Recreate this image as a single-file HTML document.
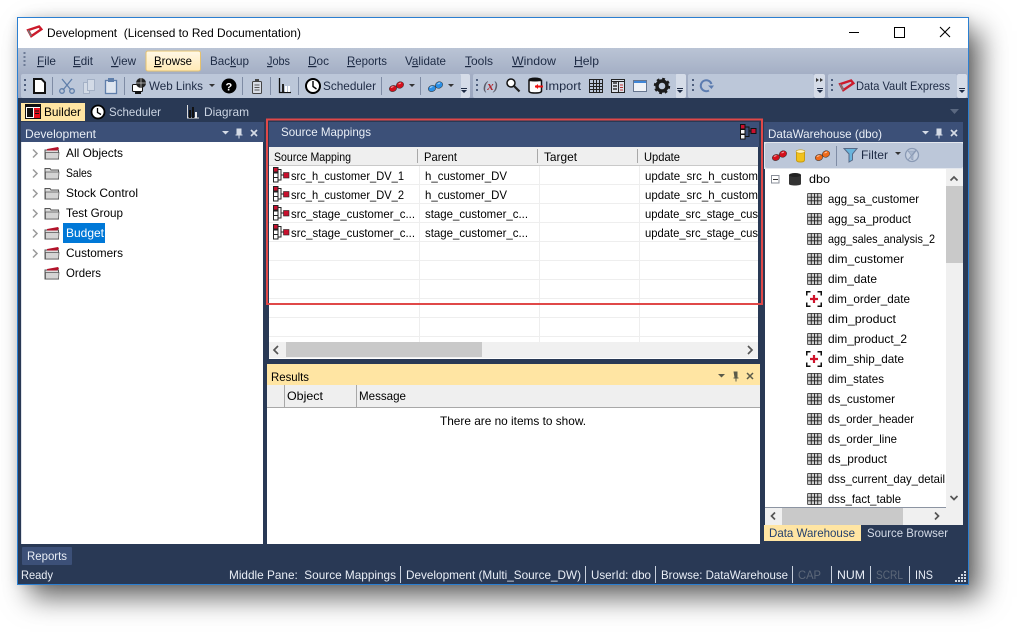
<!DOCTYPE html>
<html><head><meta charset="utf-8"><title>Development</title>
<style>
html,body{margin:0;padding:0;background:#fff;width:1017px;height:632px;overflow:hidden}
#shadow{position:absolute;left:18px;top:18px;width:950px;height:566px;box-shadow:12px 13px 26px rgba(0,0,0,.62),0 0 10px rgba(0,0,0,.14)}
svg.main{position:absolute;left:0;top:0}
text{font-family:"Liberation Sans",sans-serif;font-size:12px;fill:#000;white-space:pre}
.m{fill:#1d2a44}
.l{fill:#e9eef6}
.d{fill:#5d6879}
.u{text-decoration:underline}
</style></head><body>
<div id="shadow"></div>
<svg class="main" width="1017" height="632" viewBox="0 0 1017 632" xmlns="http://www.w3.org/2000/svg">
<defs>
<linearGradient id="g1" x1="0" y1="0" x2="0" y2="1"><stop offset="0" stop-color="#bac4d5"/><stop offset="1" stop-color="#a4afc5"/></linearGradient>
<linearGradient id="g2" x1="0" y1="0" x2="0" y2="1"><stop offset="0" stop-color="#a4afc5"/><stop offset="1" stop-color="#9aa6bf"/></linearGradient>
<linearGradient id="gb" x1="0" y1="0" x2="0" y2="1"><stop offset="0" stop-color="#fff8e6"/><stop offset="1" stop-color="#ffe9b5"/></linearGradient>
<clipPath id="c1"><rect x="269" y="147" width="489" height="195"/></clipPath>
<clipPath id="c2"><rect x="765" y="169" width="181" height="338"/></clipPath>
<symbol id="fo" viewBox="0 0 16 13" overflow="visible"><path d="M1 3V1.500H6L7 3H14.500V12H1Z" fill="#dcdcdc" stroke="#555"/><path d="M1.500 5H15L14.500 12H1.500Z" fill="#d4d4d4" stroke="#555" stroke-width=".7"/></symbol>
<symbol id="fr" viewBox="0 0 16 13" overflow="visible"><path d="M1 4V3H14.500V12H1Z" fill="#dcdcdc" stroke="#555"/><path d="M1.500 5.500H15L14.500 12H1.500Z" fill="#d4d4d4" stroke="#555" stroke-width=".7"/><path d="M3 3.500L3 2 14 0 15 1.500 13 3.500Z" fill="#b3132a"/></symbol>
<symbol id="ma" viewBox="0 0 16 16" overflow="visible"><path d="M5 2.500H8V13H5M8 8H11" fill="none" stroke="#222"/><rect x=".5" y=".5" width="4.500" height="4.500" fill="#c8102e" stroke="#222"/><rect x=".5" y="6" width="4.500" height="4.500" fill="#fff" stroke="#222"/><rect x=".5" y="10.500" width="4.500" height="4.500" fill="#fff" stroke="#222"/><rect x="10.500" y="5.500" width="5.500" height="5.500" fill="#c8102e" stroke="#222" stroke-width=".6"/></symbol>
<symbol id="tb" viewBox="0 0 16 13" overflow="visible"><rect x=".5" y=".5" width="15" height="12" rx="1" fill="#cfcfcf" stroke="#444"/><path d="M.5 4.500H15.500M.5 8.500H15.500M4.500 .5V12.500M8 .5V12.500M11.500 .5V12.500" stroke="#222" fill="none"/></symbol>
<symbol id="st" viewBox="0 0 16 16" overflow="visible"><path d="M.75 4.500V.75H4.500M11.500 .75H15.250V4.500M15.250 11.500V15.250H11.500M4.500 15.250H.75V11.500" fill="none" stroke="#111" stroke-width="1.500"/><path d="M8 4V12M4 8H12" stroke="#d0142c" stroke-width="2.200"/></symbol>
<symbol id="gl" viewBox="0 0 15 11" overflow="visible"><path d="M4 7L10 3.500" stroke="#222" stroke-width="1.200"/><ellipse cx="4" cy="7.500" rx="3.800" ry="3" fill="currentColor" stroke="#333" stroke-width=".5" transform="rotate(-18 4 7.500)"/><ellipse cx="11" cy="4" rx="3.800" ry="3.200" fill="currentColor" stroke="#333" stroke-width=".5" transform="rotate(-25 11 4)"/><path d="M2 6.500L4.500 5.500M9.500 3L12 2" stroke="#fff" stroke-opacity=".6"/></symbol>
<symbol id="lo" viewBox="0 0 16 12" overflow="visible"><path d="M1 4.500L13 .5 15.500 3.500 4.500 11Z" fill="none" stroke="#cc1a2b" stroke-width="2.600"/><path d="M1 4.500L4.500 11" stroke="#777" stroke-width="1.800"/></symbol>
</defs>

<!-- window -->
<rect x="17.500" y="17.500" width="951" height="567" fill="#fff" stroke="#2b7fd1"/>
<rect x="18" y="48" width="950" height="26" fill="url(#g1)"/>
<rect x="18" y="74" width="950" height="24" fill="url(#g2)"/>
<rect x="18" y="98" width="950" height="486" fill="#293955"/>
<rect x="17" y="98" width="1" height="486" fill="#2b7fd1"/>
<rect x="968" y="98" width="1" height="486" fill="#2b7fd1"/>

<!-- title -->
<use href="#lo" x="27" y="26" width="15" height="11"/>
<text x="47" y="37" textLength="254" lengthAdjust="spacingAndGlyphs">Development  (Licensed to Red Documentation)</text>
<path d="M849 32.500H859" stroke="#000"/>
<rect x="894.500" y="27.500" width="10" height="10" fill="none" stroke="#000"/>
<path d="M940 27L950 37M950 27L940 37" stroke="#000" stroke-width="1.100"/>

<!-- menu -->
<path d="M24.500 52v2M24.500 56v2M24.500 60v2M24.500 64v2" stroke="#6c7a95" stroke-width="2"/>
<rect x="146" y="51" width="54.500" height="20" rx="2" fill="url(#gb)" stroke="#e6c26e"/>
<text class="m" x="37" y="65" textLength="19" lengthAdjust="spacingAndGlyphs"><tspan class="u">F</tspan>ile</text>
<text class="m" x="73" y="65" textLength="20" lengthAdjust="spacingAndGlyphs"><tspan class="u">E</tspan>dit</text>
<text class="m" x="111" y="65" textLength="25" lengthAdjust="spacingAndGlyphs"><tspan class="u">V</tspan>iew</text>
<text x="154" y="65" textLength="38" lengthAdjust="spacingAndGlyphs"><tspan class="u">B</tspan>rowse</text>
<text class="m" x="210" y="65" textLength="39" lengthAdjust="spacingAndGlyphs">Bac<tspan class="u">k</tspan>up</text>
<text class="m" x="267" y="65" textLength="23" lengthAdjust="spacingAndGlyphs"><tspan class="u">J</tspan>obs</text>
<text class="m" x="308" y="65" textLength="21" lengthAdjust="spacingAndGlyphs"><tspan class="u">D</tspan>oc</text>
<text class="m" x="347" y="65" textLength="40" lengthAdjust="spacingAndGlyphs"><tspan class="u">R</tspan>eports</text>
<text class="m" x="405" y="65" textLength="41" lengthAdjust="spacingAndGlyphs">V<tspan class="u">a</tspan>lidate</text>
<text class="m" x="465" y="65" textLength="28" lengthAdjust="spacingAndGlyphs"><tspan class="u">T</tspan>ools</text>
<text class="m" x="512" y="65" textLength="44" lengthAdjust="spacingAndGlyphs"><tspan class="u">W</tspan>indow</text>
<text class="m" x="574" y="65" textLength="25" lengthAdjust="spacingAndGlyphs"><tspan class="u">H</tspan>elp</text>

<!-- toolbar bands -->
<rect x="459" y="74" width="11" height="24" rx="2" fill="#d5dce8"/>
<rect x="21" y="74" width="440" height="24" rx="2" fill="#bcc7d9"/>
<rect x="675" y="74" width="11" height="24" rx="2" fill="#d5dce8"/>
<rect x="473" y="74" width="203" height="24" rx="2" fill="#bcc7d9"/>
<rect x="814" y="74" width="11" height="24" rx="2" fill="#d5dce8"/>
<rect x="688" y="74" width="126" height="24" rx="2" fill="#bcc7d9"/>
<rect x="957" y="74" width="10" height="24" rx="2" fill="#d5dce8"/>
<rect x="828" y="74" width="129" height="24" rx="2" fill="#bcc7d9"/>
<g fill="#4e5e7c">
<rect x="24" y="79" width="2" height="2"/><rect x="24" y="84" width="2" height="2"/><rect x="24" y="89" width="2" height="2"/>
<rect x="476" y="79" width="2" height="2"/><rect x="476" y="84" width="2" height="2"/><rect x="476" y="89" width="2" height="2"/>
<rect x="692" y="79" width="2" height="2"/><rect x="692" y="84" width="2" height="2"/><rect x="692" y="89" width="2" height="2"/>
<rect x="831" y="79" width="2" height="2"/><rect x="831" y="84" width="2" height="2"/><rect x="831" y="89" width="2" height="2"/>
</g>
<g fill="#1d2a44">
<path d="M461 90h6l-3 3z M461 88h6v1h-6z"/><path d="M677 90h6l-3 3z M677 88h6v1h-6z"/>
<path d="M817 90h6l-3 3z M817 88h6v1h-6z"/><path d="M959 90h6l-3 3z M959 88h6v1h-6z"/>
</g>
<g stroke="#7f8ca5"><path d="M52.500 77V95M124.500 77V95M242.500 77V95M270.500 77V95M298.500 77V95M381.500 77V95M420.500 77V95"/></g>
<!-- new -->
<path d="M34 79H41.500L45 82.500V93H34Z" fill="#fff" stroke="#111" stroke-width="2"/>
<!-- cut -->
<path d="M62 79L71 90M72 79L63 90" stroke="#5f7eaa" stroke-width="1.300" fill="none"/><circle cx="62" cy="91" r="2.300" fill="none" stroke="#5f7eaa" stroke-width="1.300"/><circle cx="72" cy="91" r="2.300" fill="none" stroke="#5f7eaa" stroke-width="1.300"/>
<!-- copy -->
<path d="M83.500 82.500H89.500V93.500H83.500Z" fill="#d2dae6" stroke="#a4b1c6"/><path d="M87.500 79.500H94.500V90.500H87.500Z" fill="#d2dae6" stroke="#a4b1c6"/>
<!-- paste -->
<rect x="105.500" y="80.500" width="11" height="13" fill="#dfe6f0" stroke="#5f7eaa" stroke-width="1.300"/><rect x="108" y="78" width="6" height="4" fill="#5f7eaa"/>
<!-- globe -->
<rect x="132.500" y="84.500" width="10" height="7" rx="1" fill="#fff" stroke="#111"/><circle cx="141" cy="83" r="5" fill="#222"/><path d="M136 83H146M141 78V88" stroke="#ccc" stroke-width=".7"/><rect x="135" y="92" width="6" height="2" fill="#111"/>
<text class="m" x="149" y="90" textLength="54" lengthAdjust="spacingAndGlyphs">Web Links</text>
<path d="M209 84h6l-3 3z" fill="#333"/>
<circle cx="229" cy="86" r="7.500" fill="#000"/>
<text x="225.500" y="90.500" style="font-size:11px;font-weight:bold;fill:#fff">?</text>
<!-- clipboard -->
<rect x="252.500" y="81.500" width="9" height="12" rx="1" fill="#d8dde6" stroke="#444"/><rect x="255" y="79" width="4" height="3" fill="#444"/><path d="M254.500 85H259.500M254.500 87.500H259.500M254.500 90H259.500" stroke="#555"/>
<!-- chart -->
<path d="M279.500 78V92.500H291" fill="none" stroke="#111" stroke-width="1.300"/><rect x="282" y="84" width="2" height="8" fill="#222"/><rect x="285" y="86" width="2" height="6" fill="#fff"/><rect x="288" y="86" width="2" height="6" fill="#fff"/>
<!-- clock -->
<circle cx="313" cy="86" r="7" fill="#fff" stroke="#000" stroke-width="2"/><path d="M313 81V86.500L316.500 89" fill="none" stroke="#000" stroke-width="1.400"/>
<text class="m" x="323" y="90" textLength="53" lengthAdjust="spacingAndGlyphs">Scheduler</text>
<use href="#gl" x="389" y="81" width="15" height="11" color="#d4101c"/>
<path d="M409 84h6l-3 3z" fill="#333"/>
<use href="#gl" x="428" y="81" width="15" height="11" color="#2a8fe6"/>
<path d="M448 84h6l-3 3z" fill="#333"/>
<!-- band 2 -->
<text x="483" y="90" textLength="15" lengthAdjust="spacingAndGlyphs" style="font-family:'Liberation Serif',serif;font-style:italic;font-size:13px;font-weight:bold;fill:#5c5c6a">(<tspan style="fill:#b0272f">x</tspan>)</text>
<circle cx="511" cy="83" r="4" fill="#fff" stroke="#111" stroke-width="1.500"/><path d="M514 86L519.500 91.500" stroke="#222" stroke-width="2.200"/>
<path d="M529 80.500H541.500V91C541.500 92.500 539 93 535 93 531 93 529 92.500 529 91Z" fill="#fff" stroke="#111" stroke-width="1.500"/><ellipse cx="535" cy="79.500" rx="6.500" ry="2" fill="#111"/><path d="M535 86.500H543" stroke="#ee1111" stroke-width="2"/><path d="M535 86.500l3-2.500v5z" fill="#ee1111"/>
<text class="m" x="545" y="90" textLength="36" lengthAdjust="spacingAndGlyphs">Import</text>
<path d="M589.500 79.500H602.500V92.500H589.500ZM589.500 83.500H602.500M589.500 86.500H602.500M589.500 89.500H602.500M593.500 79.500V92.500M596.500 79.500V92.500M599.500 79.500V92.500" fill="none" stroke="#222"/>
<rect x="611.500" y="79.500" width="13" height="13" fill="#dde2ea" stroke="#222"/><path d="M613 83H617M613 86H617M613 89H617" stroke="#333" stroke-width="1.400"/><path d="M611.500 81.500H624.500M618.500 81.500V92.500" stroke="#222"/><path d="M620 85H623M620 87.500H623M620 90H623" stroke="#b33"/>
<rect x="633.500" y="80.500" width="13" height="11" fill="#f0f3f8" stroke="#66758f"/><rect x="634" y="81" width="12" height="2" fill="#3f86d8"/>
<circle cx="662" cy="86" r="5" fill="none" stroke="#1a1a1a" stroke-width="3.400"/><circle cx="662" cy="86" r="7.200" fill="none" stroke="#1a1a1a" stroke-width="2" stroke-dasharray="2.800 2.850"/>
<!-- band 3 -->
<path d="M711.500 84A5.500 5.500 0 1 0 709 90.500" fill="none" stroke="#5c7cb0" stroke-width="2"/><path d="M708 85.500H714L711.500 89Z" fill="#5c7cb0"/>
<path d="M816 78l3 2-3 2zM820 78l3 2-3 2z" fill="#333"/>
<!-- band 4 -->
<use href="#lo" x="839" y="80" width="15" height="11"/>
<text class="m" x="856" y="90" textLength="94" lengthAdjust="spacingAndGlyphs">Data Vault Express</text>

<!-- tabs -->
<rect x="21" y="103" width="64" height="18" fill="#ffe5a3"/>
<rect x="25.500" y="104.500" width="15" height="14" fill="#fff" stroke="#111"/><rect x="26" y="105" width="14" height="2" fill="#111"/><rect x="27" y="108" width="6" height="9" fill="#111"/><rect x="34" y="108" width="6" height="10" fill="#e8101a"/><path d="M35 111H39M35 113.500H39" stroke="#111"/>
<text x="44" y="116" textLength="37" lengthAdjust="spacingAndGlyphs">Builder</text>
<circle cx="98" cy="112" r="6.500" fill="#fff" stroke="#000" stroke-width="1.800"/><path d="M97.500 108V112.500L101 114.500" fill="none" stroke="#000" stroke-width="1.300"/>
<text x="109" y="116" textLength="52" lengthAdjust="spacingAndGlyphs" style="fill:#ccd5e3">Scheduler</text>
<path d="M187.500 105V118H199" fill="none" stroke="#ddd"/><rect x="189" y="110" width="2" height="8" fill="#111"/><rect x="192" y="107" width="2" height="11" fill="#111"/><rect x="195" y="112" width="2" height="6" fill="#eee"/>
<text x="204" y="116" textLength="45" lengthAdjust="spacingAndGlyphs" style="fill:#ccd5e3">Diagram</text>
<path d="M950 109h9l-4.500 5z" fill="#5a6880"/>

<!-- left pane -->
<rect x="21" y="122" width="243" height="20" fill="#3c5078"/>
<rect x="22" y="142" width="241" height="402" fill="#fff"/>
<rect x="21" y="142" width="1" height="402" fill="#dfe3ea"/>
<text class="l" x="25" y="138" textLength="71" lengthAdjust="spacingAndGlyphs">Development</text>
<path d="M222 131h7l-3.500 3.500z" fill="#d5dbe6"/>
<path d="M236.500 128.500h5v6h1v1h-3v3h-1v-3h-3v-1h1z" fill="#d5dbe6"/>
<path d="M251 130L257 136M257 130L251 136" stroke="#d5dbe6" stroke-width="1.700"/>
<g fill="none" stroke="#9a9a9a" stroke-width="1.500">
<path d="M33 149.500L37 153.500 33 157.500M33 169.500L37 173.500 33 177.500M33 189.500L37 193.500 33 197.500M33 209.500L37 213.500 33 217.500M33 229.500L37 233.500 33 237.500M33 249.500L37 253.500 33 257.500"/>
</g>
<use href="#fr" x="44" y="147" width="16" height="13"/>
<use href="#fo" x="44" y="167" width="16" height="13"/>
<use href="#fo" x="44" y="187" width="16" height="13"/>
<use href="#fo" x="44" y="207" width="16" height="13"/>
<use href="#fr" x="44" y="227" width="16" height="13"/>
<use href="#fr" x="44" y="247" width="16" height="13"/>
<use href="#fr" x="44" y="267" width="16" height="13"/>
<rect x="63" y="223" width="42" height="20" fill="#0078d7"/>
<text x="66" y="157" textLength="57" lengthAdjust="spacingAndGlyphs">All Objects</text>
<text x="66" y="177" textLength="26" lengthAdjust="spacingAndGlyphs">Sales</text>
<text x="66" y="197" textLength="72" lengthAdjust="spacingAndGlyphs">Stock Control</text>
<text x="66" y="217" textLength="57" lengthAdjust="spacingAndGlyphs">Test Group</text>
<text x="66" y="237" textLength="38" lengthAdjust="spacingAndGlyphs" style="fill:#fff">Budget</text>
<text x="66" y="257" textLength="57" lengthAdjust="spacingAndGlyphs">Customers</text>
<text x="66" y="277" textLength="35" lengthAdjust="spacingAndGlyphs">Orders</text>

<!-- middle pane -->
<rect x="269" y="122" width="490" height="25" fill="#3c5078"/>
<text class="l" x="281" y="136" textLength="90" lengthAdjust="spacingAndGlyphs">Source Mappings</text>
<g transform="translate(740,124)"><path d="M5 3H9V12.500H5M9 7H11.500" fill="none" stroke="#111"/><rect x=".5" y=".5" width="4.500" height="4.500" fill="#c8102e" stroke="#111"/><rect x=".5" y="5.500" width="4.500" height="4.500" fill="#f2f2f2" stroke="#111"/><rect x=".5" y="10.500" width="4.500" height="4.500" fill="#f2f2f2" stroke="#111"/><rect x="11" y="4.500" width="5" height="5" fill="#c8102e" stroke="#111"/></g>
<rect x="269" y="147" width="489" height="212" fill="#fff"/>
<rect x="269" y="147" width="489" height="19" fill="#efefef"/>
<path d="M269 165.500H758" stroke="#c9c9c9"/>
<path d="M417.500 149V163M537.500 149V163M637.500 149V163" stroke="#a8a8a8"/>
<text x="274" y="161" textLength="77" lengthAdjust="spacingAndGlyphs">Source Mapping</text>
<text x="424" y="161" textLength="33" lengthAdjust="spacingAndGlyphs">Parent</text>
<text x="544" y="161" textLength="33" lengthAdjust="spacingAndGlyphs">Target</text>
<text x="644" y="161" textLength="36" lengthAdjust="spacingAndGlyphs">Update</text>
<path d="M269 184.500H758M269 203.500H758M269 222.500H758M269 241.500H758M269 260.500H758M269 279.500H758M269 298.500H758M269 317.500H758M269 336.500H758M419.500 166V342M539.500 166V342M639.500 166V342" stroke="#eeeeee" fill="none"/>
<use href="#ma" x="273" y="167" width="16" height="16"/>
<use href="#ma" x="273" y="186" width="16" height="16"/>
<use href="#ma" x="273" y="205" width="16" height="16"/>
<use href="#ma" x="273" y="224" width="16" height="16"/>
<g clip-path="url(#c1)">
<text x="291" y="180" textLength="113" lengthAdjust="spacingAndGlyphs">src_h_customer_DV_1</text>
<text x="291" y="199" textLength="113" lengthAdjust="spacingAndGlyphs">src_h_customer_DV_2</text>
<text x="291" y="218" textLength="124" lengthAdjust="spacingAndGlyphs">src_stage_customer_c...</text>
<text x="291" y="237" textLength="124" lengthAdjust="spacingAndGlyphs">src_stage_customer_c...</text>
<text x="425" y="180" textLength="82" lengthAdjust="spacingAndGlyphs">h_customer_DV</text>
<text x="425" y="199" textLength="82" lengthAdjust="spacingAndGlyphs">h_customer_DV</text>
<text x="425" y="218" textLength="103" lengthAdjust="spacingAndGlyphs">stage_customer_c...</text>
<text x="425" y="237" textLength="103" lengthAdjust="spacingAndGlyphs">stage_customer_c...</text>
<text x="645" y="180" textLength="113" lengthAdjust="spacingAndGlyphs">update_src_h_custom</text>
<text x="645" y="199" textLength="113" lengthAdjust="spacingAndGlyphs">update_src_h_custom</text>
<text x="645" y="218" textLength="113" lengthAdjust="spacingAndGlyphs">update_src_stage_cus</text>
<text x="645" y="237" textLength="113" lengthAdjust="spacingAndGlyphs">update_src_stage_cus</text>
</g>
<rect x="269" y="342" width="489" height="16" fill="#f0f0f0"/>
<rect x="286" y="342" width="196" height="15" fill="#c9c9c9"/>
<path d="M278 346L274 350 278 354M748 346L752 350 748 354" fill="none" stroke="#555" stroke-width="1.700"/>

<!-- red highlight -->
<rect x="267" y="119.500" width="495" height="184.500" fill="none" stroke="#e04848" stroke-width="2"/>

<!-- results -->
<rect x="267" y="364" width="493" height="21" fill="#ffe5a3"/>
<text x="271" y="381" textLength="38" lengthAdjust="spacingAndGlyphs">Results</text>
<path d="M718 374h7l-3.500 3.500z" fill="#5a5a4a"/>
<path d="M733.500 371.500h4v6h1v1h-2v3h-1v-3h-2v-1h1z" fill="#5a5a4a"/>
<path d="M747 373L753 379M753 373L747 379" stroke="#5a5a4a" stroke-width="1.500"/>
<rect x="267" y="385" width="493" height="159" fill="#fff"/>
<rect x="267" y="385" width="493" height="22" fill="#efefef"/>
<path d="M267 407.500H760M284.500 385V407M356.500 385V407" stroke="#a8a8a8"/>
<text x="287" y="400" textLength="36" lengthAdjust="spacingAndGlyphs">Object</text>
<text x="359" y="400" textLength="47" lengthAdjust="spacingAndGlyphs">Message</text>
<text x="440" y="425" textLength="146" lengthAdjust="spacingAndGlyphs">There are no items to show.</text>

<!-- right pane -->
<rect x="764" y="122" width="199" height="20" fill="#3c5078"/>
<text class="l" x="768" y="138" textLength="114" lengthAdjust="spacingAndGlyphs">DataWarehouse (dbo)</text>
<path d="M922 131h7l-3.500 3.500z" fill="#d5dbe6"/>
<path d="M936.500 128.500h5v6h1v1h-3v3h-1v-3h-3v-1h1z" fill="#d5dbe6"/>
<path d="M951 130L957 136M957 130L951 136" stroke="#d5dbe6" stroke-width="1.700"/>
<rect x="764" y="142" width="199" height="27" fill="#e3e7ee"/>
<rect x="765" y="143" width="198" height="25" rx="2" fill="#bcc7d9"/>
<use href="#gl" x="772" y="150" width="15" height="11" color="#d4101c"/>
<path d="M796.500 152.500H804.500V160C804.500 161.500 802.500 162 800.500 162 798.500 162 796.500 161.500 796.500 160Z" fill="#f1c21c" stroke="#c89b10"/><ellipse cx="800.500" cy="151.500" rx="4.500" ry="1.700" fill="#fff4c0" stroke="#c89b10" stroke-width=".6"/>
<use href="#gl" x="815" y="150" width="15" height="11" color="#ee6a1a"/>
<path d="M836.500 146V166" stroke="#7f8ca5"/>
<path d="M844 148.500H857L852.500 154V160L849 162V154Z" fill="#69b4dc" stroke="#566a88"/>
<text class="m" x="861" y="159" textLength="27" lengthAdjust="spacingAndGlyphs">Filter</text>
<path d="M895 152h6l-3 3z" fill="#333"/>
<circle cx="912" cy="155" r="6.500" fill="#c6d0e0" stroke="#8a9ab5" stroke-width="1.300"/><path d="M908 151H916L913 155V160L911 159V155Z" fill="#a9b7cd" stroke="#8a9ab5" stroke-width=".6"/><path d="M908 160L916 150" stroke="#8a9ab5"/>
<rect x="765" y="169" width="181" height="338" fill="#fff"/>
<rect x="946" y="169" width="17" height="339" fill="#f0f0f0"/>
<rect x="946" y="186" width="17" height="77" fill="#c9c9c9"/>
<path d="M950.500 180.500L954 177 957.500 180.500M950.500 496L954 499.500 957.500 496" fill="none" stroke="#555" stroke-width="1.700"/>
<rect x="765" y="507.500" width="198" height="17.500" fill="#f0f0f0"/>
<rect x="782" y="508" width="121" height="17" fill="#c9c9c9"/>
<path d="M775 512.500L771.500 516 775 519.500M935 512.500L938.500 516 935 519.500" fill="none" stroke="#555" stroke-width="1.700"/>
<rect x="771.500" y="175.500" width="7.500" height="7.500" fill="#fff" stroke="#8a8f99"/><path d="M773 179.500H778" stroke="#333"/>
<path d="M789 175V184C789 185 792 185.500 795 185.500 798 185.500 801 185 801 184V175Z" fill="#333"/><ellipse cx="795" cy="175" rx="6" ry="2" fill="#222"/>
<text x="809" y="183" textLength="21" lengthAdjust="spacingAndGlyphs">dbo</text>
<use href="#tb" x="807" y="193" width="15" height="12"/>
<use href="#tb" x="807" y="213" width="15" height="12"/>
<use href="#tb" x="807" y="233" width="15" height="12"/>
<use href="#tb" x="807" y="253" width="15" height="12"/>
<use href="#tb" x="807" y="273" width="15" height="12"/>
<use href="#st" x="806" y="291" width="16" height="16"/>
<use href="#tb" x="807" y="313" width="15" height="12"/>
<use href="#tb" x="807" y="333" width="15" height="12"/>
<use href="#st" x="806" y="351" width="16" height="16"/>
<use href="#tb" x="807" y="373" width="15" height="12"/>
<use href="#tb" x="807" y="393" width="15" height="12"/>
<use href="#tb" x="807" y="413" width="15" height="12"/>
<use href="#tb" x="807" y="433" width="15" height="12"/>
<use href="#tb" x="807" y="453" width="15" height="12"/>
<use href="#tb" x="807" y="473" width="15" height="12"/>
<use href="#tb" x="807" y="493" width="15" height="12"/>
<g clip-path="url(#c2)">
<text x="828" y="203" textLength="91" lengthAdjust="spacingAndGlyphs">agg_sa_customer</text>
<text x="828" y="223" textLength="83" lengthAdjust="spacingAndGlyphs">agg_sa_product</text>
<text x="828" y="243" textLength="107" lengthAdjust="spacingAndGlyphs">agg_sales_analysis_2</text>
<text x="828" y="263" textLength="76" lengthAdjust="spacingAndGlyphs">dim_customer</text>
<text x="828" y="283" textLength="49" lengthAdjust="spacingAndGlyphs">dim_date</text>
<text x="828" y="303" textLength="82" lengthAdjust="spacingAndGlyphs">dim_order_date</text>
<text x="828" y="323" textLength="68" lengthAdjust="spacingAndGlyphs">dim_product</text>
<text x="828" y="343" textLength="79" lengthAdjust="spacingAndGlyphs">dim_product_2</text>
<text x="828" y="363" textLength="76" lengthAdjust="spacingAndGlyphs">dim_ship_date</text>
<text x="828" y="383" textLength="56" lengthAdjust="spacingAndGlyphs">dim_states</text>
<text x="828" y="403" textLength="67" lengthAdjust="spacingAndGlyphs">ds_customer</text>
<text x="828" y="423" textLength="86" lengthAdjust="spacingAndGlyphs">ds_order_header</text>
<text x="828" y="443" textLength="69" lengthAdjust="spacingAndGlyphs">ds_order_line</text>
<text x="828" y="463" textLength="59" lengthAdjust="spacingAndGlyphs">ds_product</text>
<text x="828" y="483" textLength="117" lengthAdjust="spacingAndGlyphs">dss_current_day_detail</text>
<text x="828" y="503" textLength="73" lengthAdjust="spacingAndGlyphs">dss_fact_table</text>
</g>
<rect x="764" y="525" width="97" height="16" fill="#ffe5a3"/>
<text x="769" y="537" textLength="86" lengthAdjust="spacingAndGlyphs" style="fill:#24406e">Data Warehouse</text>
<text x="867" y="537" textLength="81" lengthAdjust="spacingAndGlyphs" style="fill:#d5dce8">Source Browser</text>

<!-- bottom -->
<rect x="22" y="547" width="50" height="18" rx="1" fill="#3c5078"/>
<text class="l" x="27" y="560" textLength="40" lengthAdjust="spacingAndGlyphs">Reports</text>
<text class="l" x="21" y="579" textLength="32" lengthAdjust="spacingAndGlyphs">Ready</text>
<text class="l" x="229" y="579" textLength="167" lengthAdjust="spacingAndGlyphs">Middle Pane:  Source Mappings</text>
<text class="l" x="406" y="579" textLength="175" lengthAdjust="spacingAndGlyphs">Development (Multi_Source_DW)</text>
<text class="l" x="591" y="579" textLength="60" lengthAdjust="spacingAndGlyphs">UserId: dbo</text>
<text class="l" x="661" y="579" textLength="127" lengthAdjust="spacingAndGlyphs">Browse: DataWarehouse</text>
<text class="d" x="798" y="579" textLength="23" lengthAdjust="spacingAndGlyphs">CAP</text>
<text class="l" x="837" y="579" textLength="28" lengthAdjust="spacingAndGlyphs">NUM</text>
<text class="d" x="876" y="579" textLength="27" lengthAdjust="spacingAndGlyphs">SCRL</text>
<text class="l" x="915" y="579" textLength="18" lengthAdjust="spacingAndGlyphs">INS</text>
<path d="M400.500 566V583M585.500 566V583M655.500 566V583M792.500 566V583M831.500 566V583M870.500 566V583M909.500 566V583" stroke="#c9d1de"/>
<g fill="#cfd6e2"><rect x="964" y="571" width="2" height="2"/><rect x="961" y="574" width="2" height="2"/><rect x="964" y="574" width="2" height="2"/><rect x="958" y="577" width="2" height="2"/><rect x="961" y="577" width="2" height="2"/><rect x="964" y="577" width="2" height="2"/><rect x="955" y="580" width="2" height="2"/><rect x="958" y="580" width="2" height="2"/><rect x="961" y="580" width="2" height="2"/><rect x="964" y="580" width="2" height="2"/></g>
</svg>
</body></html>
